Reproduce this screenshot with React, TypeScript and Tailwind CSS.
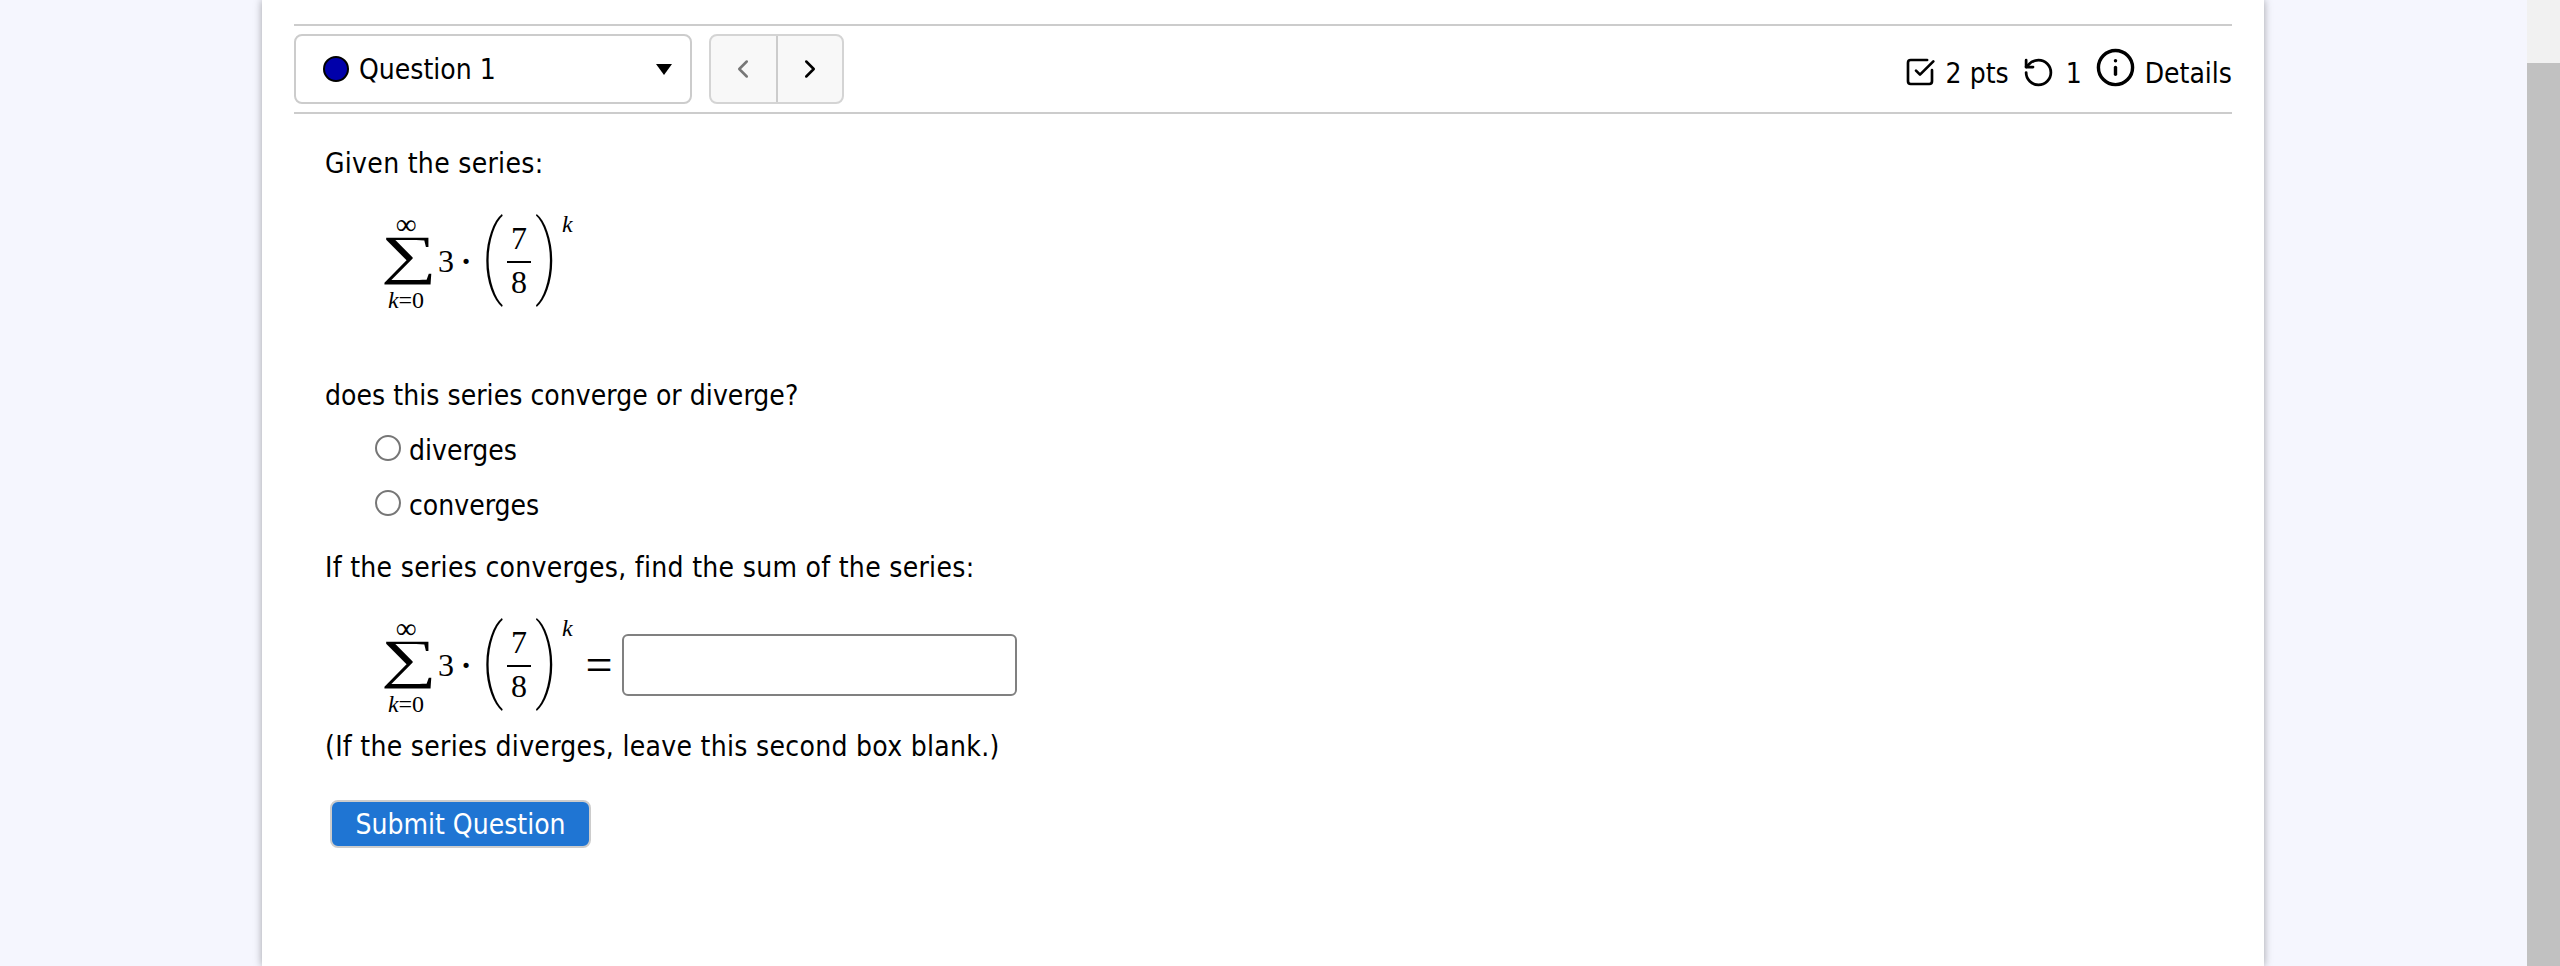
import { ChevronLeft, ChevronRight, Info, RotateCcw, SquareCheckBig } from "lucide-react";

function SumMath() {
  return (
    <div className="flex items-center font-['Liberation_Serif',serif] text-black h-[108px] w-[204px]">
      <div className="flex flex-col items-center w-[60px] shrink-0">
        <span className="h-[30px] flex items-end text-[29px] leading-[26px]">∞</span>
        <span className="h-[48px] flex items-center text-[54px] leading-[48px] scale-x-[1.45] translate-x-[3px] -translate-y-[6px]">∑</span>
        <span className="h-[30px] flex items-center text-[24px] leading-[30px] whitespace-nowrap"><i>k</i>=0</span>
      </div>
      <span className="w-[18px] text-center text-[32px] ml-[1px] shrink-0">3</span>
      <span className="w-[22px] text-center text-[32px] font-bold shrink-0">·</span>
      <span className="w-[24px] text-center font-['Roboto',sans-serif] font-thin text-[90px] leading-[100px] ml-[3px] -translate-y-[5px] shrink-0">(</span>
      <div className="flex flex-col items-center w-[24px] ml-[3px] -mt-[3px] shrink-0">
        <span className="text-[32px] leading-[34px] pb-[6px] border-b-2 border-black w-full text-center">7</span>
        <span className="text-[32px] leading-[34px] pt-[2px]">8</span>
      </div>
      <span className="w-[24px] text-center font-['Roboto',sans-serif] font-thin text-[90px] leading-[100px] ml-[3px] -translate-y-[5px] shrink-0">)</span>
      <i className="text-[24px] leading-[26px] self-start mt-[4px] ml-[4px]">k</i>
    </div>
  );
}

export default function App() {
  return (
    <div className="flex h-[966px] w-full overflow-hidden bg-[#f5f6fe] font-['DejaVu_Sans',sans-serif] text-[28px] text-black [font-stretch:condensed]">
      <div className="flex-1 min-w-0">
        <div className="ml-[262px] w-[2002px] h-[966px] bg-white px-[32px] pt-[24px] shadow-[0_0_8px_rgba(0,0,0,0.35)]">
          <div className="flex items-center justify-between h-[90px] border-y-2 border-[#cccccc]">
            <div className="flex items-center gap-[17px]">
              <div className="flex items-center w-[398px] h-[70px] border-2 border-[#cccccc] rounded-lg pl-[27px] pr-[18px]">
                <span className="w-[26px] h-[26px] rounded-full bg-[#0000aa] border-2 border-black" />
                <span className="ml-[10px] flex-1 pt-[2px]">Question 1</span>
                <span className="w-0 h-0 border-x-[8px] border-x-transparent border-t-[11px] border-t-black" />
              </div>
              <div className="flex h-[70px] w-[135px] border-2 border-[#d4d4d4] rounded-lg bg-[#f8f8f8]">
                <div className="flex-1 flex items-center justify-center text-[#777]"><ChevronLeft size={30} strokeWidth={2} /></div>
                <div className="flex-1 flex items-center justify-center border-l-2 border-[#cccccc]"><ChevronRight size={30} strokeWidth={2} /></div>
              </div>
            </div>
            <div className="flex items-center">
              <SquareCheckBig size={32} strokeWidth={2} className="mt-[6px]" />
              <span className="ml-[10px] mt-[10px]">2 pts</span>
              <RotateCcw size={33} strokeWidth={2} className="ml-[13px] mt-[6px]" />
              <span className="ml-[11px] mt-[10px]">1</span>
              <Info size={41} strokeWidth={2} className="ml-[13px] -mt-[4px]" />
              <span className="ml-[9px] mt-[10px]">Details</span>
            </div>
          </div>
          <div className="pl-[31px]">
            <p className="mt-[31px] h-[36px] pt-[1px] leading-[36px] tracking-[0.3px]">Given the series:</p>
            <div className="mt-[26px] ml-[51px]"><SumMath /></div>
            <p className="mt-[61px] h-[36px] pt-[2px] leading-[36px] tracking-[0.05px]">does this series converge or diverge?</p>
            <div className="ml-[50px] mt-[18px] flex flex-col gap-[19px]">
              <label className="flex items-center gap-[8px] h-[36px] pt-[6px]"><span className="w-[26px] h-[26px] rounded-full border-2 border-[#767676] -mt-[6px]" />diverges</label>
              <label className="flex items-center gap-[8px] h-[36px] pt-[5px]"><span className="w-[26px] h-[26px] rounded-full border-2 border-[#767676] -mt-[6px]" />converges</label>
            </div>
            <p className="mt-[26px] h-[36px] pt-[3px] leading-[36px] tracking-[0.3px]">If the series converges, find the sum of the series:</p>
            <div className="mt-[28px] ml-[51px] flex items-center">
              <SumMath />
              <span className="w-[42px] text-center font-['Liberation_Serif',serif] text-[48px] leading-[62px] -translate-x-[2px]">=</span>
              <div className="w-[395px] h-[62px] border-2 border-[#808080] rounded-md" />
            </div>
            <p className="mt-[8px] h-[36px] pt-[2px] leading-[36px] tracking-[0.3px]">(If the series diverges, leave this second box blank.)</p>
            <button className="block mt-[37px] ml-[5px] w-[261px] h-[48px] pt-[2px] rounded-lg bg-[#1f75d3] border-2 border-[#cccccc] text-white">Submit Question</button>
          </div>
        </div>
      </div>
      <div className="w-[33px] bg-[#f1f1f1] pt-[63px]">
        <div className="h-full bg-[#c1c1c1]" />
      </div>
    </div>
  );
}
